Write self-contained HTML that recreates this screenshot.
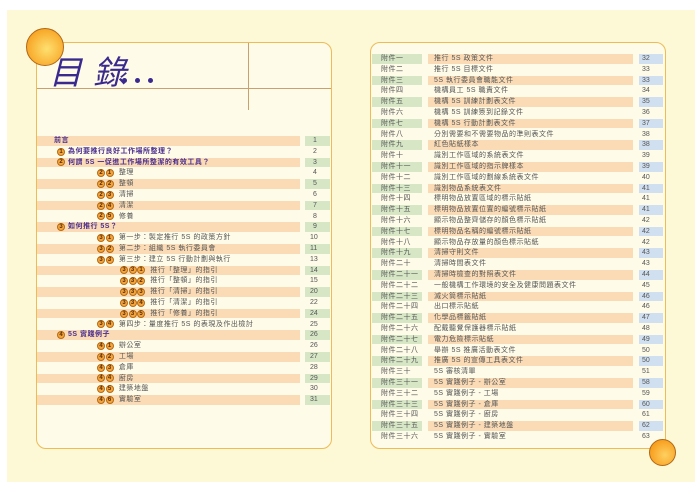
<!DOCTYPE html>
<html><head><meta charset="utf-8">
<style>
*{margin:0;padding:0;box-sizing:border-box}
body{width:700px;height:494px;background:#fff;position:relative;overflow:hidden;font-family:"Liberation Sans","Noto Sans CJK TC",sans-serif;}
.bg{position:absolute;left:7px;top:10px;width:688px;height:472px;background:#fdf8d6}
.card{position:absolute;top:42px;height:407px;background:#fefbe8;border:1.5px solid #eebb55;border-radius:10px}
.r{position:absolute;height:9.6px;font-size:7px;line-height:9.6px;color:#555;letter-spacing:.5px;white-space:nowrap}
.s{position:absolute;height:9.6px}
.o{background:#fadbb6}.g{background:#d7e7c6}.b{background:#d0e0f0}
.h{color:#4b2f8f;font-weight:bold}
.c{display:inline-block;width:8px;height:8px;border-radius:50%;background:#f3a640;border:.5px solid #b86a10;color:#5a2a00;font-size:6px;line-height:7.5px;text-align:center;letter-spacing:0;vertical-align:top;margin-top:.8px;margin-right:.5px;font-weight:bold}
.n{position:absolute;font-size:7px;line-height:9.6px;color:#555}
.d{position:absolute;top:78px;width:5px;height:5px;border-radius:50%;background:#3a2a8e;z-index:5}
</style></head><body>
<div class="bg"></div>
<div class="card" style="left:36px;width:296px"></div>
<div style="position:absolute;left:37px;top:88px;width:294px;height:1px;background:#c9a070"></div>
<div style="position:absolute;left:248px;top:43px;width:1px;height:67px;background:#c9a070"></div>
<div style="position:absolute;left:26px;top:28px;width:38px;height:38px;border-radius:50%;background:radial-gradient(circle at 55% 55%,#fee070,#f8a828 70%,#e88a18);border:1px solid #b06818"></div>
<div style="position:absolute;left:49px;top:50px;font-size:33px;font-style:italic;color:#3a2a8e;font-family:'Noto Sans CJK TC',sans-serif;line-height:40px;letter-spacing:2px">目 錄</div>
<div class="d" style="left:122px"></div><div class="d" style="left:135px"></div><div class="d" style="left:148px"></div>

<div class="card" style="left:370px;width:296px"></div>
<div style="position:absolute;left:649px;top:439px;width:27px;height:27px;border-radius:50%;background:radial-gradient(circle at 60% 60%,#fed060,#f8a020 70%,#e08010);border:1px solid #b06818"></div>

<div id="L">
<div class="s o" style="left:37px;top:136px;width:263px"></div><div class="s g" style="left:305px;top:136px;width:25px"></div>
<div class="s o" style="left:37px;top:157.6px;width:263px"></div><div class="s g" style="left:305px;top:157.6px;width:25px"></div>
<div class="s o" style="left:37px;top:179.2px;width:263px"></div><div class="s g" style="left:305px;top:179.2px;width:25px"></div>
<div class="s o" style="left:37px;top:200.8px;width:263px"></div><div class="s g" style="left:305px;top:200.8px;width:25px"></div>
<div class="s o" style="left:37px;top:222.4px;width:263px"></div><div class="s g" style="left:305px;top:222.4px;width:25px"></div>
<div class="s o" style="left:37px;top:244px;width:263px"></div><div class="s g" style="left:305px;top:244px;width:25px"></div>
<div class="s o" style="left:37px;top:265.6px;width:263px"></div><div class="s g" style="left:305px;top:265.6px;width:25px"></div>
<div class="s o" style="left:37px;top:287.2px;width:263px"></div><div class="s g" style="left:305px;top:287.2px;width:25px"></div>
<div class="s o" style="left:37px;top:308.8px;width:263px"></div><div class="s g" style="left:305px;top:308.8px;width:25px"></div>
<div class="s o" style="left:37px;top:330.4px;width:263px"></div><div class="s g" style="left:305px;top:330.4px;width:25px"></div>
<div class="s o" style="left:37px;top:352px;width:263px"></div><div class="s g" style="left:305px;top:352px;width:25px"></div>
<div class="s o" style="left:37px;top:373.6px;width:263px"></div><div class="s g" style="left:305px;top:373.6px;width:25px"></div>
<div class="s o" style="left:37px;top:395.2px;width:263px"></div><div class="s g" style="left:305px;top:395.2px;width:25px"></div>

<div class="r h" style="left:54px;top:136px">前言</div>
<div class="r h" style="left:57px;top:146.8px"><span class="c">1</span> 為何要推行良好工作場所整理？</div>
<div class="r h" style="left:57px;top:157.6px"><span class="c">2</span> 何謂 5S 一促進工作場所整潔的有效工具？</div>
<div class="r" style="left:97px;top:168.4px"><span class="c">2</span><span class="c">1</span>&nbsp; 整理</div>
<div class="r" style="left:97px;top:179.2px"><span class="c">2</span><span class="c">2</span>&nbsp; 整頓</div>
<div class="r" style="left:97px;top:190px"><span class="c">2</span><span class="c">3</span>&nbsp; 清掃</div>
<div class="r" style="left:97px;top:200.8px"><span class="c">2</span><span class="c">4</span>&nbsp; 清潔</div>
<div class="r" style="left:97px;top:211.6px"><span class="c">2</span><span class="c">5</span>&nbsp; 修養</div>
<div class="r h" style="left:57px;top:222.4px"><span class="c">3</span> 如何推行 5S？</div>
<div class="r" style="left:97px;top:233.2px"><span class="c">3</span><span class="c">1</span>&nbsp; 第一步：製定推行 5S 的政策方針</div>
<div class="r" style="left:97px;top:244px"><span class="c">3</span><span class="c">2</span>&nbsp; 第二步：組織 5S 執行委員會</div>
<div class="r" style="left:97px;top:254.8px"><span class="c">3</span><span class="c">3</span>&nbsp; 第三步：建立 5S 行動計劃與執行</div>
<div class="r" style="left:120px;top:265.6px"><span class="c">3</span><span class="c">3</span><span class="c">1</span>&nbsp; 推行「整理」的指引</div>
<div class="r" style="left:120px;top:276.4px"><span class="c">3</span><span class="c">3</span><span class="c">2</span>&nbsp; 推行「整頓」的指引</div>
<div class="r" style="left:120px;top:287.2px"><span class="c">3</span><span class="c">3</span><span class="c">3</span>&nbsp; 推行「清掃」的指引</div>
<div class="r" style="left:120px;top:298px"><span class="c">3</span><span class="c">3</span><span class="c">4</span>&nbsp; 推行「清潔」的指引</div>
<div class="r" style="left:120px;top:308.8px"><span class="c">3</span><span class="c">3</span><span class="c">5</span>&nbsp; 推行「修養」的指引</div>
<div class="r" style="left:97px;top:319.6px"><span class="c">3</span><span class="c">4</span>&nbsp; 第四步：量度推行 5S 的表現及作出檢討</div>
<div class="r h" style="left:57px;top:330.4px"><span class="c">4</span> 5S 實踐例子</div>
<div class="r" style="left:97px;top:341.2px"><span class="c">4</span><span class="c">1</span>&nbsp; 辦公室</div>
<div class="r" style="left:97px;top:352px"><span class="c">4</span><span class="c">2</span>&nbsp; 工場</div>
<div class="r" style="left:97px;top:362.8px"><span class="c">4</span><span class="c">3</span>&nbsp; 倉庫</div>
<div class="r" style="left:97px;top:373.6px"><span class="c">4</span><span class="c">4</span>&nbsp; 廚房</div>
<div class="r" style="left:97px;top:384.4px"><span class="c">4</span><span class="c">5</span>&nbsp; 建築地盤</div>
<div class="r" style="left:97px;top:395.2px"><span class="c">4</span><span class="c">6</span>&nbsp; 實驗室</div>

<div class="n" style="left:313px;top:136px">1</div>
<div class="n" style="left:313px;top:146.8px">2</div>
<div class="n" style="left:313px;top:157.6px">3</div>
<div class="n" style="left:313px;top:168.4px">4</div>
<div class="n" style="left:313px;top:179.2px">5</div>
<div class="n" style="left:313px;top:190px">6</div>
<div class="n" style="left:313px;top:200.8px">7</div>
<div class="n" style="left:313px;top:211.6px">8</div>
<div class="n" style="left:313px;top:222.4px">9</div>
<div class="n" style="left:310px;top:233.2px">10</div>
<div class="n" style="left:310px;top:244px">11</div>
<div class="n" style="left:310px;top:254.8px">13</div>
<div class="n" style="left:310px;top:265.6px">14</div>
<div class="n" style="left:310px;top:276.4px">15</div>
<div class="n" style="left:310px;top:287.2px">20</div>
<div class="n" style="left:310px;top:298px">22</div>
<div class="n" style="left:310px;top:308.8px">24</div>
<div class="n" style="left:310px;top:319.6px">25</div>
<div class="n" style="left:310px;top:330.4px">26</div>
<div class="n" style="left:310px;top:341.2px">26</div>
<div class="n" style="left:310px;top:352px">27</div>
<div class="n" style="left:310px;top:362.8px">28</div>
<div class="n" style="left:310px;top:373.6px">29</div>
<div class="n" style="left:310px;top:384.4px">30</div>
<div class="n" style="left:310px;top:395.2px">31</div>
</div>

<div>
<div class="s g" style="left:372px;top:54px;width:50px"></div><div class="s o" style="left:428px;top:54px;width:205px"></div><div class="s b" style="left:639px;top:54px;width:24px"></div>
<div class="s g" style="left:372px;top:75.6px;width:50px"></div><div class="s o" style="left:428px;top:75.6px;width:205px"></div><div class="s b" style="left:639px;top:75.6px;width:24px"></div>
<div class="s g" style="left:372px;top:97.2px;width:50px"></div><div class="s o" style="left:428px;top:97.2px;width:205px"></div><div class="s b" style="left:639px;top:97.2px;width:24px"></div>
<div class="s g" style="left:372px;top:118.8px;width:50px"></div><div class="s o" style="left:428px;top:118.8px;width:205px"></div><div class="s b" style="left:639px;top:118.8px;width:24px"></div>
<div class="s g" style="left:372px;top:140.4px;width:50px"></div><div class="s o" style="left:428px;top:140.4px;width:205px"></div><div class="s b" style="left:639px;top:140.4px;width:24px"></div>
<div class="s g" style="left:372px;top:162px;width:50px"></div><div class="s o" style="left:428px;top:162px;width:205px"></div><div class="s b" style="left:639px;top:162px;width:24px"></div>
<div class="s g" style="left:372px;top:183.6px;width:50px"></div><div class="s o" style="left:428px;top:183.6px;width:205px"></div><div class="s b" style="left:639px;top:183.6px;width:24px"></div>
<div class="s g" style="left:372px;top:205.2px;width:50px"></div><div class="s o" style="left:428px;top:205.2px;width:205px"></div><div class="s b" style="left:639px;top:205.2px;width:24px"></div>
<div class="s g" style="left:372px;top:226.8px;width:50px"></div><div class="s o" style="left:428px;top:226.8px;width:205px"></div><div class="s b" style="left:639px;top:226.8px;width:24px"></div>
<div class="s g" style="left:372px;top:248.4px;width:50px"></div><div class="s o" style="left:428px;top:248.4px;width:205px"></div><div class="s b" style="left:639px;top:248.4px;width:24px"></div>
<div class="s g" style="left:372px;top:270px;width:50px"></div><div class="s o" style="left:428px;top:270px;width:205px"></div><div class="s b" style="left:639px;top:270px;width:24px"></div>
<div class="s g" style="left:372px;top:291.6px;width:50px"></div><div class="s o" style="left:428px;top:291.6px;width:205px"></div><div class="s b" style="left:639px;top:291.6px;width:24px"></div>
<div class="s g" style="left:372px;top:313.2px;width:50px"></div><div class="s o" style="left:428px;top:313.2px;width:205px"></div><div class="s b" style="left:639px;top:313.2px;width:24px"></div>
<div class="s g" style="left:372px;top:334.8px;width:50px"></div><div class="s o" style="left:428px;top:334.8px;width:205px"></div><div class="s b" style="left:639px;top:334.8px;width:24px"></div>
<div class="s g" style="left:372px;top:356.4px;width:50px"></div><div class="s o" style="left:428px;top:356.4px;width:205px"></div><div class="s b" style="left:639px;top:356.4px;width:24px"></div>
<div class="s g" style="left:372px;top:378px;width:50px"></div><div class="s o" style="left:428px;top:378px;width:205px"></div><div class="s b" style="left:639px;top:378px;width:24px"></div>
<div class="s g" style="left:372px;top:399.6px;width:50px"></div><div class="s o" style="left:428px;top:399.6px;width:205px"></div><div class="s b" style="left:639px;top:399.6px;width:24px"></div>
<div class="s g" style="left:372px;top:421.2px;width:50px"></div><div class="s o" style="left:428px;top:421.2px;width:205px"></div><div class="s b" style="left:639px;top:421.2px;width:24px"></div>
</div>
<div style="position:absolute;left:0;top:0">
<div class="r" style="left:381px;top:54px">附件一</div><div class="r" style="left:434px;top:54px">推行 5S 政策文件</div><div class="n" style="left:642px;top:54px">32</div>
<div class="r" style="left:381px;top:64.8px">附件二</div><div class="r" style="left:434px;top:64.8px">推行 5S 目標文件</div><div class="n" style="left:642px;top:64.8px">33</div>
<div class="r" style="left:381px;top:75.6px">附件三</div><div class="r" style="left:434px;top:75.6px">5S 執行委員會職能文件</div><div class="n" style="left:642px;top:75.6px">33</div>
<div class="r" style="left:381px;top:86.4px">附件四</div><div class="r" style="left:434px;top:86.4px">機構員工 5S 職責文件</div><div class="n" style="left:642px;top:86.4px">34</div>
<div class="r" style="left:381px;top:97.2px">附件五</div><div class="r" style="left:434px;top:97.2px">機構 5S 訓練計劃表文件</div><div class="n" style="left:642px;top:97.2px">35</div>
<div class="r" style="left:381px;top:108px">附件六</div><div class="r" style="left:434px;top:108px">機構 5S 訓練簽到記錄文件</div><div class="n" style="left:642px;top:108px">36</div>
<div class="r" style="left:381px;top:118.8px">附件七</div><div class="r" style="left:434px;top:118.8px">機構 5S 行動計劃表文件</div><div class="n" style="left:642px;top:118.8px">37</div>
<div class="r" style="left:381px;top:129.6px">附件八</div><div class="r" style="left:434px;top:129.6px">分別需要和不需要物品的準則表文件</div><div class="n" style="left:642px;top:129.6px">38</div>
<div class="r" style="left:381px;top:140.4px">附件九</div><div class="r" style="left:434px;top:140.4px">紅色貼紙樣本</div><div class="n" style="left:642px;top:140.4px">38</div>
<div class="r" style="left:381px;top:151.2px">附件十</div><div class="r" style="left:434px;top:151.2px">識別工作區域的系統表文件</div><div class="n" style="left:642px;top:151.2px">39</div>
<div class="r" style="left:381px;top:162px">附件十一</div><div class="r" style="left:434px;top:162px">識別工作區域的指示牌樣本</div><div class="n" style="left:642px;top:162px">39</div>
<div class="r" style="left:381px;top:172.8px">附件十二</div><div class="r" style="left:434px;top:172.8px">識別工作區域的劃線系統表文件</div><div class="n" style="left:642px;top:172.8px">40</div>
<div class="r" style="left:381px;top:183.6px">附件十三</div><div class="r" style="left:434px;top:183.6px">識別物品系統表文件</div><div class="n" style="left:642px;top:183.6px">41</div>
<div class="r" style="left:381px;top:194.4px">附件十四</div><div class="r" style="left:434px;top:194.4px">標明物品放置區域的標示貼紙</div><div class="n" style="left:642px;top:194.4px">41</div>
<div class="r" style="left:381px;top:205.2px">附件十五</div><div class="r" style="left:434px;top:205.2px">標明物品放置位置的編號標示貼紙</div><div class="n" style="left:642px;top:205.2px">41</div>
<div class="r" style="left:381px;top:216px">附件十六</div><div class="r" style="left:434px;top:216px">顯示物品整齊儲存的顏色標示貼紙</div><div class="n" style="left:642px;top:216px">42</div>
<div class="r" style="left:381px;top:226.8px">附件十七</div><div class="r" style="left:434px;top:226.8px">標明物品名稱的編號標示貼紙</div><div class="n" style="left:642px;top:226.8px">42</div>
<div class="r" style="left:381px;top:237.6px">附件十八</div><div class="r" style="left:434px;top:237.6px">顯示物品存放量的顏色標示貼紙</div><div class="n" style="left:642px;top:237.6px">42</div>
<div class="r" style="left:381px;top:248.4px">附件十九</div><div class="r" style="left:434px;top:248.4px">清掃守則文件</div><div class="n" style="left:642px;top:248.4px">43</div>
<div class="r" style="left:381px;top:259.2px">附件二十</div><div class="r" style="left:434px;top:259.2px">清掃時間表文件</div><div class="n" style="left:642px;top:259.2px">43</div>
<div class="r" style="left:381px;top:270px">附件二十一</div><div class="r" style="left:434px;top:270px">清掃時檢查的對照表文件</div><div class="n" style="left:642px;top:270px">44</div>
<div class="r" style="left:381px;top:280.8px">附件二十二</div><div class="r" style="left:434px;top:280.8px">一般機構工作環境的安全及健康問題表文件</div><div class="n" style="left:642px;top:280.8px">45</div>
<div class="r" style="left:381px;top:291.6px">附件二十三</div><div class="r" style="left:434px;top:291.6px">滅火筒標示貼紙</div><div class="n" style="left:642px;top:291.6px">46</div>
<div class="r" style="left:381px;top:302.4px">附件二十四</div><div class="r" style="left:434px;top:302.4px">出口標示貼紙</div><div class="n" style="left:642px;top:302.4px">46</div>
<div class="r" style="left:381px;top:313.2px">附件二十五</div><div class="r" style="left:434px;top:313.2px">化學品標籤貼紙</div><div class="n" style="left:642px;top:313.2px">47</div>
<div class="r" style="left:381px;top:324px">附件二十六</div><div class="r" style="left:434px;top:324px">配戴聽覺保護器標示貼紙</div><div class="n" style="left:642px;top:324px">48</div>
<div class="r" style="left:381px;top:334.8px">附件二十七</div><div class="r" style="left:434px;top:334.8px">電力危險標示貼紙</div><div class="n" style="left:642px;top:334.8px">49</div>
<div class="r" style="left:381px;top:345.6px">附件二十八</div><div class="r" style="left:434px;top:345.6px">舉辦 5S 推廣活動表文件</div><div class="n" style="left:642px;top:345.6px">50</div>
<div class="r" style="left:381px;top:356.4px">附件二十九</div><div class="r" style="left:434px;top:356.4px">推廣 5S 的宣傳工具表文件</div><div class="n" style="left:642px;top:356.4px">50</div>
<div class="r" style="left:381px;top:367.2px">附件三十</div><div class="r" style="left:434px;top:367.2px">5S 審核清單</div><div class="n" style="left:642px;top:367.2px">51</div>
<div class="r" style="left:381px;top:378px">附件三十一</div><div class="r" style="left:434px;top:378px">5S 實踐例子 - 辦公室</div><div class="n" style="left:642px;top:378px">58</div>
<div class="r" style="left:381px;top:388.8px">附件三十二</div><div class="r" style="left:434px;top:388.8px">5S 實踐例子 - 工場</div><div class="n" style="left:642px;top:388.8px">59</div>
<div class="r" style="left:381px;top:399.6px">附件三十三</div><div class="r" style="left:434px;top:399.6px">5S 實踐例子 - 倉庫</div><div class="n" style="left:642px;top:399.6px">60</div>
<div class="r" style="left:381px;top:410.4px">附件三十四</div><div class="r" style="left:434px;top:410.4px">5S 實踐例子 - 廚房</div><div class="n" style="left:642px;top:410.4px">61</div>
<div class="r" style="left:381px;top:421.2px">附件三十五</div><div class="r" style="left:434px;top:421.2px">5S 實踐例子 - 建築地盤</div><div class="n" style="left:642px;top:421.2px">62</div>
<div class="r" style="left:381px;top:432px">附件三十六</div><div class="r" style="left:434px;top:432px">5S 實踐例子 - 實驗室</div><div class="n" style="left:642px;top:432px">63</div>
</div>
</body></html>
